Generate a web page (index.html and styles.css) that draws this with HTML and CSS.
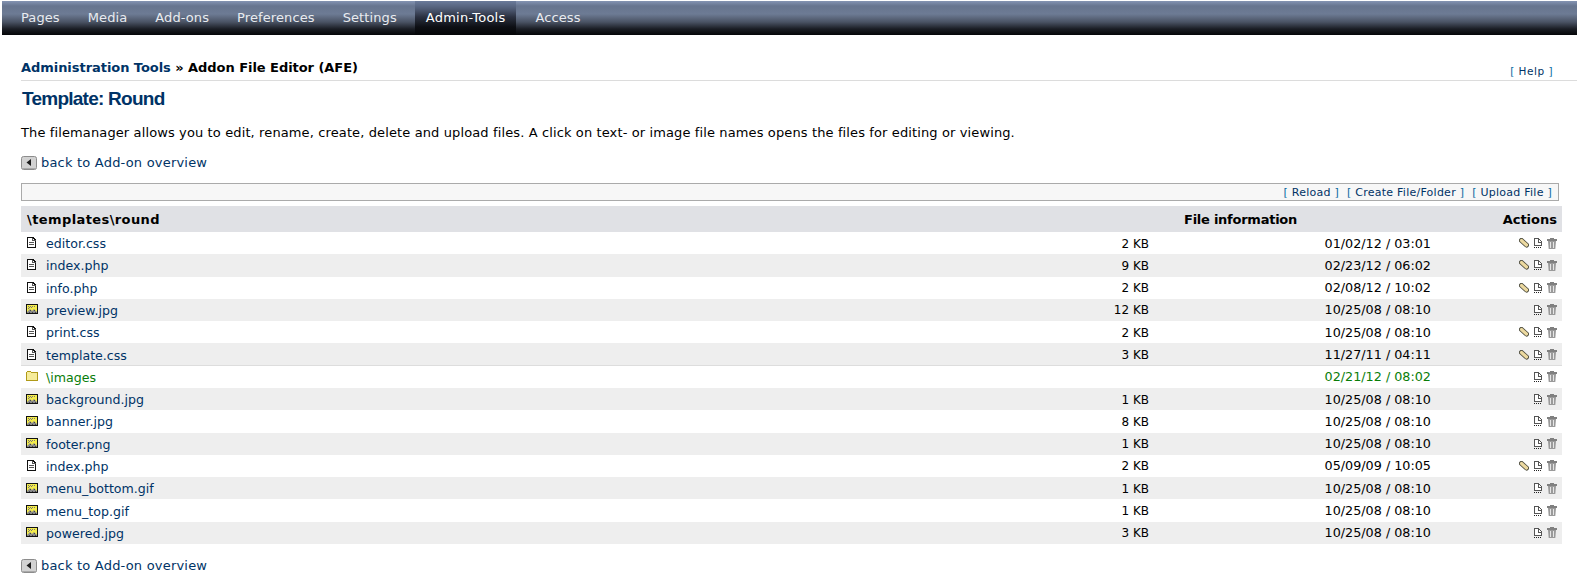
FILE: index.html
```html
<!DOCTYPE html>
<html lang="en">
  <head>
    <meta charset="UTF-8" />
    <title>Addon File Editor</title>
    <link rel="stylesheet" href="styles.css">
  </head>
  <body>
    <svg class="defs" width="0" height="0">
      <symbol id="i-back" viewBox="0 0 16 14">
        <rect x="0.5" y="0.5" width="15" height="13" rx="2" fill="#d2d2d2" stroke="#8c8c8c"/>
        <path d="M1 12.5h14" stroke="#aaa"/>
        <path d="M10 3v7L5.5 6.500z" fill="#1c1c1c"/>
      </symbol>
      <symbol id="i-file" viewBox="0 0 12 11">
        <path d="M1.500.500h5.500l2.500 2.500v7.500h-8z" fill="#fff" stroke="#111" shape-rendering="crispEdges"/>
        <path d="M6.500 1v2.500h3M3 5.500h5M3 7.500h5" fill="none" stroke="#555" shape-rendering="crispEdges"/>
      </symbol>
      <symbol id="i-img" viewBox="0 0 12 10">
        <rect x="0.500" y="0.500" width="11" height="9" fill="#f4ec4a" stroke="#111" shape-rendering="crispEdges"/>
        <path d="M2 2h1v1H2zM4 2h1v1H4zM6 2h1v1H6zM3 3h1v1H3zM5 3h1v1H5zM2 4h1v1H2zM8 2h1v1H8z" fill="#777"/>
        <path d="M1 9V8l3-3 2 2 2-2 3 3v1z" fill="#8a8a8a"/>
        <path d="M4 6h1v1H4zM3 8h1v1H3zM6 8h1v1H6zM8 6h1v1H8zM9 8h1v1H9z" fill="#444"/>
      </symbol>
      <symbol id="i-folder" viewBox="0 0 12 10">
        <path d="M.500 1.500l1-1h3l1 1h6v8H.500z" fill="#f6ec9a" stroke="#b09a18" shape-rendering="crispEdges"/>
      </symbol>
      <symbol id="i-edit" viewBox="0 0 10 10">
        <path d="M2.500 2.500l5 4.500" stroke="#4a4a3c" stroke-width="5" stroke-linecap="round"/>
        <path d="M2.500 2.500l5 4.500" stroke="#ecd9a0" stroke-width="3.200" stroke-linecap="round"/>
      </symbol>
      <symbol id="i-rename" viewBox="0 0 8 10">
        <path d="M.500.500h4l3 3v4H.500z" fill="#fff" stroke="#555" shape-rendering="crispEdges"/>
        <path d="M4 1v3h3" fill="none" stroke="#555" shape-rendering="crispEdges"/>
        <path d="M0 9.500h8" stroke="#222" stroke-dasharray="1 1" shape-rendering="crispEdges"/>
      </symbol>
      <symbol id="i-trash" viewBox="0 0 10 11">
        <path d="M0 1h10v2H0z" fill="#808080"/>
        <path d="M3 0h4v1H3z" fill="#808080"/>
        <path d="M1 3h8l-.7 8H1.700z" fill="#9a9a9a"/>
        <path d="M3.500 4v6M6.500 4v6" stroke="#e6e6e6"/>
      </symbol>
    </svg>

    <nav class="topnav">
      <a href="#">Pages</a>
      <a href="#">Media</a>
      <a href="#">Add-ons</a>
      <a href="#">Preferences</a>
      <a href="#">Settings</a>
      <a href="#" class="current">Admin-Tools</a>
      <a href="#">Access</a>
    </nav>

    <main class="content">
      <div class="titlebar">
        <div class="crumbs"><a href="#">Administration Tools</a> » Addon File Editor (AFE)</div>
        <a href="#" class="help"><span class="br">[</span> Help <span class="br">]</span></a>
      </div>
      <h1>Template: Round</h1>
      <p class="intro">The filemanager allows you to edit, rename, create, delete and upload files. A click on text- or image file names opens the files for editing or viewing.</p>
      <a href="#" class="back back-top"><svg><use href="#i-back"/></svg>back to Add-on overview</a>

      <div class="toolbar">
        <a href="#"><span class="br">[</span> Reload <span class="br">]</span></a>
        <a href="#"><span class="br">[</span> Create File/Folder <span class="br">]</span></a>
        <a href="#"><span class="br">[</span> Upload File <span class="br">]</span></a>
      </div>

      <table class="files">
        <colgroup>
          <col class="w-name">
          <col class="w-size">
          <col class="w-date">
          <col class="w-actions">
        </colgroup>
        <thead>
          <tr>
            <th class="c-name">\templates\round</th>
            <th class="c-info" colspan="2">File information</th>
            <th class="c-actions">Actions</th>
          </tr>
        </thead>
        <tbody>
          <tr><td class="c-name"><svg class="ico-file"><use href="#i-file"/></svg><a href="#">editor.css</a></td><td class="c-size">2 KB</td><td class="c-date">01/02/12 / 03:01</td><td class="c-actions"><svg class="a-edit"><use href="#i-edit"/></svg><svg class="a-ren"><use href="#i-rename"/></svg><svg class="a-del"><use href="#i-trash"/></svg></td></tr>
          <tr><td class="c-name"><svg class="ico-file"><use href="#i-file"/></svg><a href="#">index.php</a></td><td class="c-size">9 KB</td><td class="c-date">02/23/12 / 06:02</td><td class="c-actions"><svg class="a-edit"><use href="#i-edit"/></svg><svg class="a-ren"><use href="#i-rename"/></svg><svg class="a-del"><use href="#i-trash"/></svg></td></tr>
          <tr><td class="c-name"><svg class="ico-file"><use href="#i-file"/></svg><a href="#">info.php</a></td><td class="c-size">2 KB</td><td class="c-date">02/08/12 / 10:02</td><td class="c-actions"><svg class="a-edit"><use href="#i-edit"/></svg><svg class="a-ren"><use href="#i-rename"/></svg><svg class="a-del"><use href="#i-trash"/></svg></td></tr>
          <tr><td class="c-name"><svg class="ico-img"><use href="#i-img"/></svg><a href="#">preview.jpg</a></td><td class="c-size">12 KB</td><td class="c-date">10/25/08 / 08:10</td><td class="c-actions"><svg class="a-ren"><use href="#i-rename"/></svg><svg class="a-del"><use href="#i-trash"/></svg></td></tr>
          <tr><td class="c-name"><svg class="ico-file"><use href="#i-file"/></svg><a href="#">print.css</a></td><td class="c-size">2 KB</td><td class="c-date">10/25/08 / 08:10</td><td class="c-actions"><svg class="a-edit"><use href="#i-edit"/></svg><svg class="a-ren"><use href="#i-rename"/></svg><svg class="a-del"><use href="#i-trash"/></svg></td></tr>
          <tr class="last-file"><td class="c-name"><svg class="ico-file"><use href="#i-file"/></svg><a href="#">template.css</a></td><td class="c-size">3 KB</td><td class="c-date">11/27/11 / 04:11</td><td class="c-actions"><svg class="a-edit"><use href="#i-edit"/></svg><svg class="a-ren"><use href="#i-rename"/></svg><svg class="a-del"><use href="#i-trash"/></svg></td></tr>
          <tr class="folder"><td class="c-name"><svg class="ico-img"><use href="#i-folder"/></svg><a href="#">\images</a></td><td class="c-size"></td><td class="c-date">02/21/12 / 08:02</td><td class="c-actions"><svg class="a-ren"><use href="#i-rename"/></svg><svg class="a-del"><use href="#i-trash"/></svg></td></tr>
          <tr><td class="c-name"><svg class="ico-img"><use href="#i-img"/></svg><a href="#">background.jpg</a></td><td class="c-size">1 KB</td><td class="c-date">10/25/08 / 08:10</td><td class="c-actions"><svg class="a-ren"><use href="#i-rename"/></svg><svg class="a-del"><use href="#i-trash"/></svg></td></tr>
          <tr><td class="c-name"><svg class="ico-img"><use href="#i-img"/></svg><a href="#">banner.jpg</a></td><td class="c-size">8 KB</td><td class="c-date">10/25/08 / 08:10</td><td class="c-actions"><svg class="a-ren"><use href="#i-rename"/></svg><svg class="a-del"><use href="#i-trash"/></svg></td></tr>
          <tr><td class="c-name"><svg class="ico-img"><use href="#i-img"/></svg><a href="#">footer.png</a></td><td class="c-size">1 KB</td><td class="c-date">10/25/08 / 08:10</td><td class="c-actions"><svg class="a-ren"><use href="#i-rename"/></svg><svg class="a-del"><use href="#i-trash"/></svg></td></tr>
          <tr><td class="c-name"><svg class="ico-file"><use href="#i-file"/></svg><a href="#">index.php</a></td><td class="c-size">2 KB</td><td class="c-date">05/09/09 / 10:05</td><td class="c-actions"><svg class="a-edit"><use href="#i-edit"/></svg><svg class="a-ren"><use href="#i-rename"/></svg><svg class="a-del"><use href="#i-trash"/></svg></td></tr>
          <tr><td class="c-name"><svg class="ico-img"><use href="#i-img"/></svg><a href="#">menu_bottom.gif</a></td><td class="c-size">1 KB</td><td class="c-date">10/25/08 / 08:10</td><td class="c-actions"><svg class="a-ren"><use href="#i-rename"/></svg><svg class="a-del"><use href="#i-trash"/></svg></td></tr>
          <tr><td class="c-name"><svg class="ico-img"><use href="#i-img"/></svg><a href="#">menu_top.gif</a></td><td class="c-size">1 KB</td><td class="c-date">10/25/08 / 08:10</td><td class="c-actions"><svg class="a-ren"><use href="#i-rename"/></svg><svg class="a-del"><use href="#i-trash"/></svg></td></tr>
          <tr><td class="c-name"><svg class="ico-img"><use href="#i-img"/></svg><a href="#">powered.jpg</a></td><td class="c-size">3 KB</td><td class="c-date">10/25/08 / 08:10</td><td class="c-actions"><svg class="a-ren"><use href="#i-rename"/></svg><svg class="a-del"><use href="#i-trash"/></svg></td></tr>
        </tbody>
      </table>

      <a href="#" class="back back-bottom"><svg><use href="#i-back"/></svg>back to Add-on overview</a>
    </main>
  </body>
</html>
```

FILE: styles.css
```css
html,
body {
  margin: 0;
  height: 581px;
  overflow: hidden;
}
body {
  font-family: "DejaVu Sans", Verdana, sans-serif;
  font-size: 13px;
  color: #000;
  background: #fff;
}
a {
  color: #003366;
  text-decoration: none;
}
.defs {
  display: block;
  height: 0;
}

.topnav {
  display: flex;
  height: 34px;
  margin: 1px 0 0 2px;
  padding-left: 5px;
  background: linear-gradient(#8494b3 0, #67758f 5px, #6d7b94 13px, #4a5364 21px, #1a1d24 28px, #050608 34px);
}
.topnav a {
  display: block;
  margin: 0 3px;
  padding: 0 11px;
  line-height: 33px;
  color: #e8ebf0;
  font-size: 13px;
  letter-spacing: .1px;
}
.topnav a.current {
  margin: 0 5px 0 4px;
  color: #fff;
  letter-spacing: .25px;
  background: linear-gradient(#6b7b9b 0, #4f5b74 8px, #2b3140 16px, #0d0f14 26px, #050608 34px);
}

.content {
  padding-left: 21px;
}
.titlebar {
  display: flex;
  justify-content: space-between;
  align-items: flex-end;
  height: 45px;
  padding-right: 24px;
  border-bottom: 1px solid #dcdcdc;
  font-weight: bold;
}
.crumbs {
  padding-bottom: 3px;
  line-height: 18px;
  letter-spacing: -.05px;
}
.help {
  padding-bottom: 2px;
  font-size: 10.500px;
  font-weight: normal;
  letter-spacing: .5px;
  line-height: 14px;
}
.br {
  color: #0a6aa1;
}
h1 {
  margin: 6px 0 0 1px;
  font-family: "Liberation Sans", Arial, sans-serif;
  font-size: 19px;
  line-height: 24px;
  letter-spacing: -.75px;
  color: #003366;
}
.intro {
  margin: 13px 0 0;
  line-height: 18px;
  letter-spacing: .12px;
}
.back {
  display: flex;
  align-items: center;
  line-height: 18px;
  letter-spacing: .2px;
}
.back svg {
  width: 16px;
  height: 14px;
  margin-right: 4px;
}
.back-top {
  margin-top: 12px;
}
.back-bottom {
  margin-top: 13px;
}

.toolbar {
  display: flex;
  justify-content: flex-end;
  gap: 8px;
  width: 1530px;
  height: 16px;
  margin-top: 11px;
  padding-right: 6px;
  border: 1px solid #aaa;
  background: #f7f7f7;
  font-size: 11px;
  line-height: 17px;
  letter-spacing: .25px;
}

.files {
  width: 1541px;
  margin-top: 5px;
  border-collapse: collapse;
  table-layout: fixed;
}
.w-name {
  width: 1000px;
}
.w-size {
  width: 128px;
}
.w-date {
  width: 282px;
}
.w-actions {
  width: 131px;
}
.files th {
  height: 26px;
  padding: 0;
  background: #e0e1e5;
  font-size: 13px;
  text-align: left;
}
.files td {
  box-sizing: border-box;
  height: 22.290px;
  padding: 0;
  font-size: 12.600px;
}
.files tbody tr:nth-child(even) td {
  background: #eee;
}
.files tr.last-file td {
  box-shadow: inset 0 -1px 0 #ddd;
}
.files tr.folder a,
.files tr.folder .c-date {
  color: #097d09;
}
.files th.c-name {
  padding-left: 6px;
  letter-spacing: .4px;
}
.files td.c-name {
  padding-left: 5px;
}
.c-name a,
.c-name svg {
  vertical-align: middle;
}
.ico-file,
.ico-img {
  width: 12px;
  margin: 0 8px 2px 0;
}
.ico-file {
  height: 11px;
}
.ico-img {
  height: 10px;
}
.files td.c-size {
  padding-top: 1px;
  font-size: 12px;
  text-align: right;
}
.files th.c-info {
  padding-left: 163px;
  letter-spacing: -.25px;
}
.files td.c-date {
  font-size: 12.750px;
  text-align: right;
}
.files th.c-actions,
.files td.c-actions {
  padding-right: 5px;
  text-align: right;
}
.c-actions svg {
  margin-bottom: 2px;
  vertical-align: middle;
}
.a-edit {
  width: 10px;
  height: 10px;
  margin-right: 5px;
}
.a-ren {
  width: 8px;
  height: 10px;
  margin-right: 5px;
}
.a-del {
  width: 10px;
  height: 11px;
}
```
